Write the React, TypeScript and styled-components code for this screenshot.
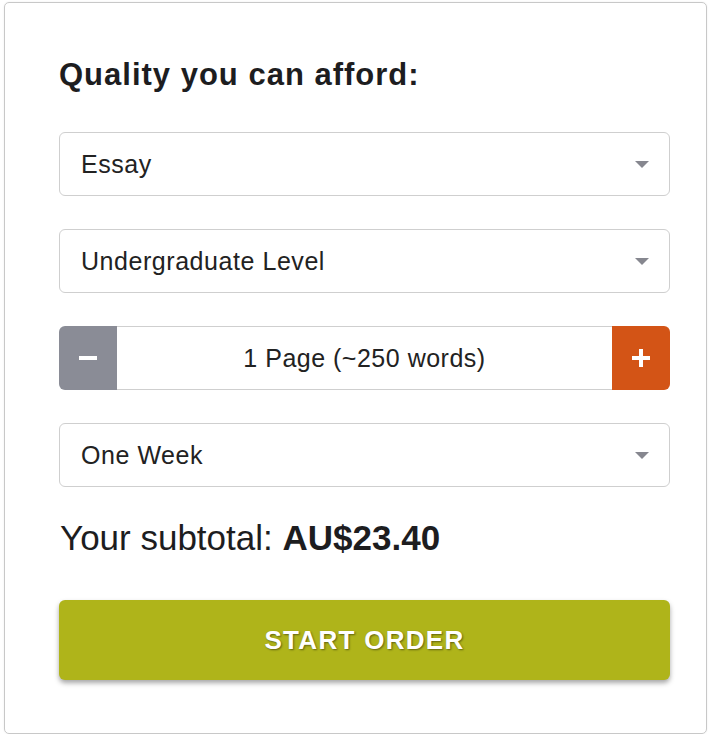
import React, { useState } from "react";
import styled, { createGlobalStyle } from "styled-components";

const GlobalStyle = createGlobalStyle`
  body {
    margin: 0;
    background: #ffffff;
    font-family: "Liberation Sans", Arial, sans-serif;
    color: #1d1d1f;
  }
`;

const Card = styled.div`
  box-sizing: border-box;
  width: 703px;
  height: 732px;
  margin: 2px 0 0 4px;
  padding: 47px 36px 0 54px;
  border: 1px solid #c8c8c8;
  border-radius: 5px;
  box-shadow: 0 0 2px rgba(0, 0, 0, 0.08);
  display: flex;
  flex-direction: column;
`;

const Title = styled.h2`
  margin: 0 0 32px;
  font-size: 31px;
  line-height: 50px;
  letter-spacing: 1px;
  font-weight: bold;
  color: #1d1d1f;
`;

const Field = styled.div`
  box-sizing: border-box;
  position: relative;
  height: 64px;
  margin-bottom: 33px;
  border: 1px solid #cfcfcf;
  border-radius: 6px;
  display: flex;
  align-items: center;
  padding: 0 21px;
  font-size: 25px;
  letter-spacing: 0.55px;
  color: #222;
  cursor: pointer;
`;

const Arrow = styled.span`
  position: absolute;
  right: 20px;
  top: 50%;
  margin-top: -3px;
  width: 0;
  height: 0;
  border-left: 7px solid transparent;
  border-right: 7px solid transparent;
  border-top: 7px solid #86878f;
`;

const Counter = styled.div`
  box-sizing: border-box;
  height: 64px;
  margin-bottom: 33px;
  display: flex;
  border-radius: 6px;
  overflow: hidden;
`;

const StepButton = styled.button<{ $tone: "minus" | "plus" }>`
  width: 58px;
  flex: none;
  border: none;
  padding: 0;
  background: ${(p) => (p.$tone === "plus" ? "#d35416" : "#8a8c96")};
  color: #fff;
  display: flex;
  align-items: center;
  justify-content: center;
  cursor: pointer;
`;

const PageCount = styled.div`
  flex: 1;
  border-top: 1px solid #cfcfcf;
  border-bottom: 1px solid #cfcfcf;
  display: flex;
  align-items: center;
  justify-content: center;
  font-size: 25px;
  letter-spacing: 0.5px;
  color: #222;
`;

const Subtotal = styled.div`
  margin: -6px 0 38px 1px;
  font-size: 35px;
  line-height: 48px;
  color: #1d1d1f;

  b {
    font-weight: bold;
  }
`;

const StartButton = styled.button`
  height: 80px;
  border: none;
  border-radius: 6px;
  background: #afb41a;
  color: #fff;
  font-family: "Liberation Sans", Arial, sans-serif;
  font-size: 26px;
  letter-spacing: 1.3px;
  font-weight: bold;
  text-shadow: 1px 1px 2px rgba(0, 0, 0, 0.45);
  box-shadow: 0 3px 5px rgba(0, 0, 0, 0.35);
  cursor: pointer;
`;

const Select: React.FC<{ label: string }> = ({ label }) => (
  <Field>
    {label}
    <Arrow />
  </Field>
);

export default function App() {
  const [pages, setPages] = useState(1);

  return (
    <>
      <GlobalStyle />
      <Card>
        <Title>Quality you can afford:</Title>
        <Select label="Essay" />
        <Select label="Undergraduate Level" />
        <Counter>
          <StepButton $tone="minus" onClick={() => setPages((p) => Math.max(1, p - 1))}>
            <svg width="18" height="18" viewBox="0 0 18 18">
              <rect x="0" y="7" width="18" height="4" fill="#fff" />
            </svg>
          </StepButton>
          <PageCount>
            {pages} {pages === 1 ? "Page" : "Pages"} (~{pages * 250} words)
          </PageCount>
          <StepButton $tone="plus" onClick={() => setPages((p) => p + 1)}>
            <svg width="18" height="18" viewBox="0 0 18 18">
              <rect x="0" y="7" width="18" height="4" fill="#fff" />
              <rect x="7" y="0" width="4" height="18" fill="#fff" />
            </svg>
          </StepButton>
        </Counter>
        <Select label="One Week" />
        <Subtotal>
          Your subtotal: <b>AU${(23.4 * pages).toFixed(2)}</b>
        </Subtotal>
        <StartButton>START ORDER</StartButton>
      </Card>
    </>
  );
}
